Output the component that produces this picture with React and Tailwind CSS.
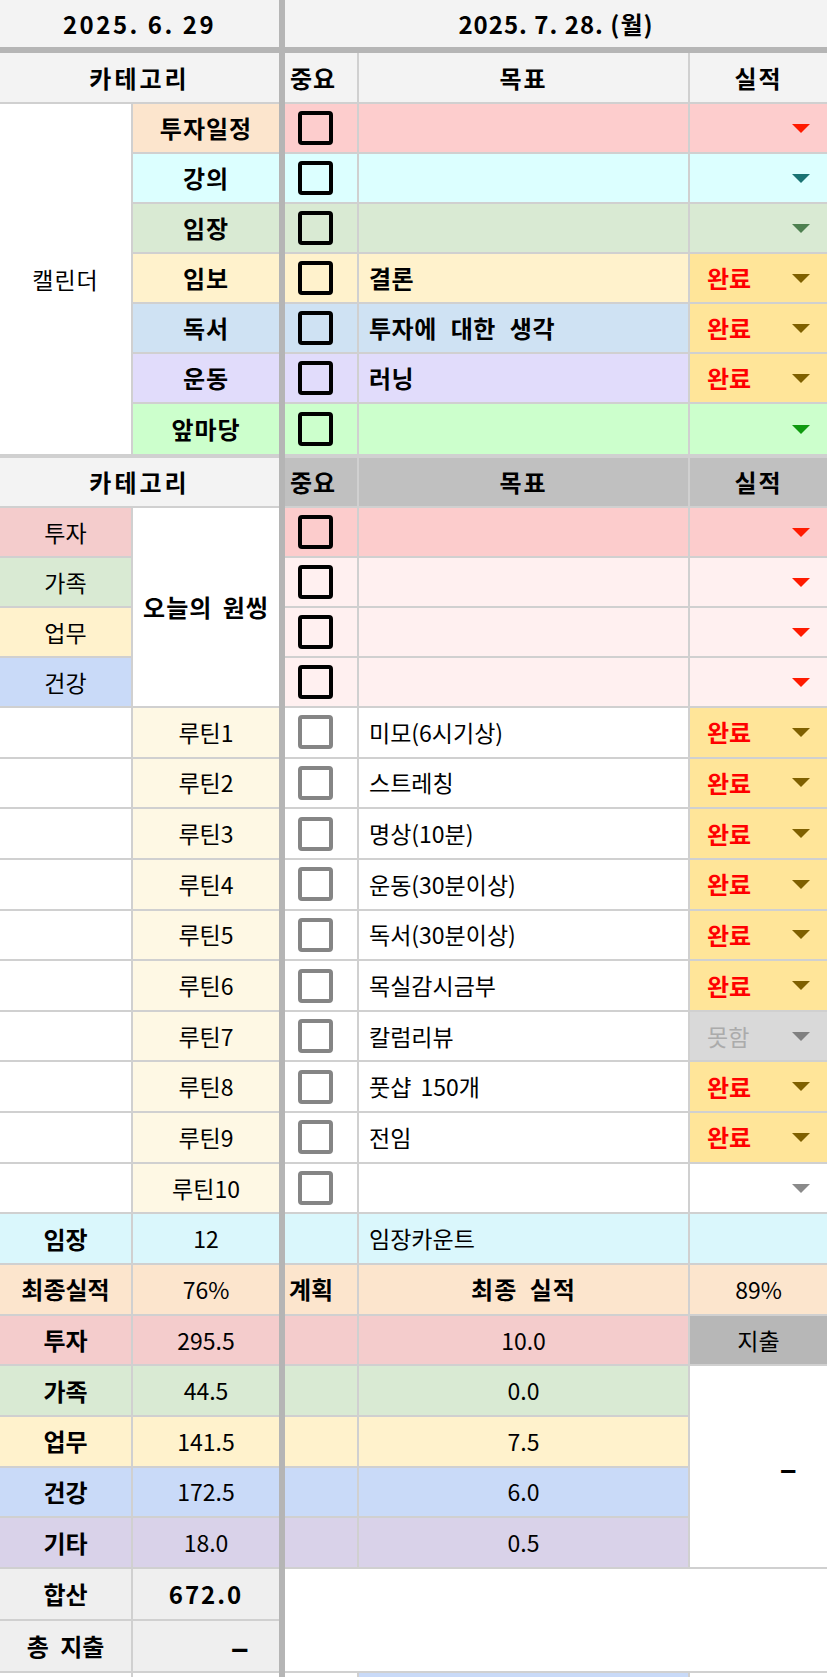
import React from "react";

const Tri = ({ color }) => (
  <svg width="18" height="9" viewBox="0 0 18 9" className="shrink-0">
    <polygon points="0,0 18,0 9,9" fill={color} />
  </svg>
);

const Chk = ({ dark }) => (
  <div
    className={
      dark
        ? "w-[35px] h-[34px] rounded-[4px] border-[4px] border-black"
        : "w-[35px] h-[34px] rounded-[4px] border-[4px] border-[#858585] bg-white"
    }
  />
);

const cal = [
  { label: "투자일정", lbg: "bg-[#fce5cd]", bg: "bg-[#fdcdcd]", tri: "#ff1a00" },
  { label: "강의", lbg: "bg-[#dcffff]", bg: "bg-[#dcffff]", tri: "#1a7373" },
  { label: "임장", lbg: "bg-[#d9ead3]", bg: "bg-[#d9ead3]", tri: "#4e8050" },
  { label: "임보", lbg: "bg-[#fff2cc]", bg: "bg-[#fff2cc]", goal: "결론", done: true },
  { label: "독서", lbg: "bg-[#cfe2f3]", bg: "bg-[#cfe2f3]", goal: "투자에 대한 생각", done: true },
  { label: "운동", lbg: "bg-[#e1dcfb]", bg: "bg-[#e1dcfb]", goal: "러닝", done: true },
  { label: "앞마당", lbg: "bg-[#ccffcc]", bg: "bg-[#ccffcc]", tri: "#0f9a0f" },
];

const one = [
  { label: "투자", lbg: "bg-[#f4cccc]", bg: "bg-[#fccccc]" },
  { label: "가족", lbg: "bg-[#d9ead3]", bg: "bg-[#fff0f0]" },
  { label: "업무", lbg: "bg-[#fff2cc]", bg: "bg-[#fff0f0]" },
  { label: "건강", lbg: "bg-[#c9daf8]", bg: "bg-[#fff0f0]" },
];

const routines = [
  { goal: "미모(6시기상)", r: "done" },
  { goal: "스트레칭", r: "done" },
  { goal: "명상(10분)", r: "done" },
  { goal: "운동(30분이상)", r: "done" },
  { goal: "독서(30분이상)", r: "done" },
  { goal: "목실감시금부", r: "done" },
  { goal: "칼럼리뷰", r: "no" },
  { goal: "풋샵 150개", r: "done" },
  { goal: "전임", r: "done" },
  { goal: "", r: "" },
];

const totals = [
  { label: "투자", bg: "bg-[#f4cccc]", v: "295.5", p: "10.0" },
  { label: "가족", bg: "bg-[#d9ead3]", v: "44.5", p: "0.0" },
  { label: "업무", bg: "bg-[#fff2cc]", v: "141.5", p: "7.5" },
  { label: "건강", bg: "bg-[#c9daf8]", v: "172.5", p: "6.0" },
  { label: "기타", bg: "bg-[#d9d2e9]", v: "18.0", p: "0.5" },
];

const B = "border-[#d0d0d0]";

export default function App() {
  return (
    <div className="w-[827px] h-[1677px] overflow-hidden bg-white text-black font-['Noto_Sans_CJK_KR',sans-serif] text-[23px] leading-none">
      <div className="grid grid-cols-[133px_146px_6px_74px_331px_137px] grid-rows-[47px_6px_51px_repeat(6,50px)_54px_50px_repeat(4,50px)_repeat(17,50.65px)_repeat(2,52px)_4px] h-full">
        <div className="col-start-3 row-span-full bg-[#b5b5b5]" />

        {/* date header */}
        <div className="col-span-2 flex items-center justify-center bg-[#f3f3f3] font-bold text-[24px] tracking-[2.5px]">
          2025. 6. 29
        </div>
        <div className="col-span-3 flex items-center justify-center bg-[#f3f3f3] font-bold text-[24px] tracking-[1px]">
          2025. 7. 28. (월)
        </div>
        <div className="col-span-2 bg-[#b5b5b5]" />
        <div className="col-span-3 bg-[#b5b5b5]" />

        {/* header 1 */}
        <div className={`col-span-2 flex items-center justify-center bg-[#f3f3f3] border-b-2 ${B} font-bold text-[24px] tracking-[3px]`}>
          카테고리
        </div>
        <div className={`flex items-center pl-[5px] bg-[#f3f3f3] border-b-2 border-r-2 ${B} font-bold text-[24px] tracking-[1px]`}>
          중요
        </div>
        <div className={`flex items-center justify-center bg-[#f3f3f3] border-b-2 border-r-2 ${B} font-bold text-[24px] tracking-[2px]`}>
          목표
        </div>
        <div className={`flex items-center justify-center bg-[#f3f3f3] border-b-2 ${B} font-bold text-[24px] tracking-[2px]`}>
          실적
        </div>

        {cal.map((r, i) => {
          const bb = i === cal.length - 1 ? "border-b-4" : "border-b-2";
          return (
            <React.Fragment key={r.label}>
              {i === 0 && (
                <div className={`row-span-7 flex items-center justify-center bg-white border-r-2 border-b-4 ${B} tracking-[1px]`}>
                  캘린더
                </div>
              )}
              <div className={`${r.lbg} ${bb} ${B} flex items-center justify-center font-bold text-[24px] tracking-[1px]`}>
                {r.label}
              </div>
              <div className={`${r.bg} ${bb} border-r-2 ${B} flex items-center pl-[13px]`}>
                <Chk dark />
              </div>
              <div className={`${r.bg} ${bb} border-r-2 ${B} flex items-center pl-[10px] font-bold text-[24px] tracking-[0.5px] [word-spacing:8px] whitespace-nowrap`}>
                {r.goal}
              </div>
              {r.done ? (
                <div className={`bg-[#ffe599] ${bb} ${B} flex items-center justify-between pl-[17px] pr-[17px]`}>
                  <span className="text-[#ff0000] font-bold text-[24px]">완료</span>
                  <Tri color="#7f6000" />
                </div>
              ) : (
                <div className={`${r.bg} ${bb} ${B} flex items-center justify-end pr-[17px]`}>
                  <Tri color={r.tri} />
                </div>
              )}
            </React.Fragment>
          );
        })}

        {/* header 2 */}
        <div className={`col-span-2 flex items-center justify-center bg-[#f3f3f3] border-b-2 ${B} font-bold text-[24px] tracking-[3px]`}>
          카테고리
        </div>
        <div className={`flex items-center pl-[5px] bg-[#c0c0c0] border-b-2 border-r-2 ${B} font-bold text-[24px] tracking-[1px]`}>
          중요
        </div>
        <div className={`flex items-center justify-center bg-[#c0c0c0] border-b-2 border-r-2 ${B} font-bold text-[24px] tracking-[2px]`}>
          목표
        </div>
        <div className={`flex items-center justify-center bg-[#c0c0c0] border-b-2 ${B} font-bold text-[24px] tracking-[2px]`}>
          실적
        </div>

        {one.map((r, i) => (
          <React.Fragment key={r.label}>
            <div className={`${r.lbg} border-b-2 border-r-2 ${B} flex items-center justify-center`}>{r.label}</div>
            {i === 0 && (
              <div className={`row-span-4 bg-white border-b-2 ${B} flex items-center justify-center font-bold text-[24px] tracking-[1px] [word-spacing:4px] whitespace-nowrap`}>
                오늘의 원씽
              </div>
            )}
            <div className={`${r.bg} border-b-2 border-r-2 ${B} flex items-center pl-[13px]`}>
              <Chk dark />
            </div>
            <div className={`${r.bg} border-b-2 border-r-2 ${B}`} />
            <div className={`${r.bg} border-b-2 ${B} flex items-center justify-end pr-[17px]`}>
              <Tri color="#ff1a00" />
            </div>
          </React.Fragment>
        ))}

        {routines.map((r, i) => (
          <React.Fragment key={i}>
            <div className={`bg-white border-b-2 border-r-2 ${B}`} />
            <div className={`bg-[#fef8e4] border-b-2 ${B} flex items-center justify-center`}>루틴{i + 1}</div>
            <div className={`bg-white border-b-2 border-r-2 ${B} flex items-center pl-[13px]`}>
              <Chk />
            </div>
            <div className={`bg-white border-b-2 border-r-2 ${B} flex items-center pl-[10px] whitespace-nowrap [word-spacing:4px]`}>{r.goal}</div>
            {r.r === "done" && (
              <div className={`bg-[#ffe599] border-b-2 ${B} flex items-center justify-between pl-[17px] pr-[17px]`}>
                <span className="text-[#ff0000] font-bold text-[24px]">완료</span>
                <Tri color="#7f6000" />
              </div>
            )}
            {r.r === "no" && (
              <div className={`bg-[#d9d9d9] border-b-2 ${B} flex items-center justify-between pl-[17px] pr-[17px]`}>
                <span className="text-[#ababab]">못함</span>
                <Tri color="#808080" />
              </div>
            )}
            {r.r === "" && (
              <div className={`bg-white border-b-2 ${B} flex items-center justify-end pr-[17px]`}>
                <Tri color="#8a8a8a" />
              </div>
            )}
          </React.Fragment>
        ))}

        {/* 임장 */}
        <div className={`bg-[#daf7fc] border-b-2 border-r-2 ${B} flex items-center justify-center font-bold text-[24px]`}>임장</div>
        <div className={`bg-[#daf7fc] border-b-2 ${B} flex items-center justify-center`}>12</div>
        <div className={`bg-[#daf7fc] border-b-2 border-r-2 ${B}`} />
        <div className={`bg-[#daf7fc] border-b-2 border-r-2 ${B} flex items-center pl-[10px]`}>임장카운트</div>
        <div className={`bg-[#daf7fc] border-b-2 ${B}`} />

        {/* 최종실적 */}
        <div className={`bg-[#fce5cd] border-b-2 border-r-2 ${B} flex items-center justify-center font-bold text-[24px] whitespace-nowrap`}>최종실적</div>
        <div className={`bg-[#fce5cd] border-b-2 ${B} flex items-center justify-center`}>76%</div>
        <div className={`bg-[#fce5cd] border-b-2 border-r-2 ${B} flex items-center pl-[4px] font-bold text-[24px]`}>계획</div>
        <div className={`bg-[#fce5cd] border-b-2 border-r-2 ${B} flex items-center justify-center font-bold text-[24px] tracking-[1px] [word-spacing:6px]`}>최종 실적</div>
        <div className={`bg-[#fce5cd] border-b-2 ${B} flex items-center justify-center`}>89%</div>

        {totals.map((r, i) => (
          <React.Fragment key={r.label}>
            <div className={`${r.bg} border-b-2 border-r-2 ${B} flex items-center justify-center font-bold text-[24px]`}>{r.label}</div>
            <div className={`${r.bg} border-b-2 ${B} flex items-center justify-center`}>{r.v}</div>
            <div className={`${r.bg} border-b-2 border-r-2 ${B}`} />
            <div className={`${r.bg} border-b-2 border-r-2 ${B} flex items-center justify-center`}>{r.p}</div>
            {i === 0 && (
              <div className={`bg-[#b7b7b7] border-b-2 ${B} flex items-center justify-center`}>지출</div>
            )}
            {i === 1 && (
              <div className={`row-span-4 bg-white border-b-2 ${B} flex items-center justify-end pr-[30px] font-bold text-[32px]`}>–</div>
            )}
          </React.Fragment>
        ))}

        {/* 합산 / 총 지출 */}
        <div className={`bg-[#efefef] border-b-2 border-r-2 ${B} flex items-center justify-center font-bold text-[24px]`}>합산</div>
        <div className={`bg-[#efefef] border-b-2 ${B} flex items-center justify-center font-bold text-[24px] tracking-[2px]`}>672.0</div>
        <div className={`col-span-3 row-span-2 bg-white border-b-2 ${B}`} />
        <div className={`bg-[#efefef] border-b-2 border-r-2 ${B} flex items-center justify-center font-bold text-[24px] [word-spacing:6px] whitespace-nowrap`}>총 지출</div>
        <div className={`bg-[#efefef] border-b-2 ${B} flex items-center justify-end pr-[30px] font-bold text-[34px]`}>–</div>

        {/* partial next row */}
        <div className={`bg-white border-r-2 ${B}`} />
        <div className="bg-white" />
        <div className={`bg-white border-r-2 ${B}`} />
        <div className={`bg-[#c9daf8] border-r-2 ${B}`} />
        <div className="bg-white" />
      </div>
    </div>
  );
}
